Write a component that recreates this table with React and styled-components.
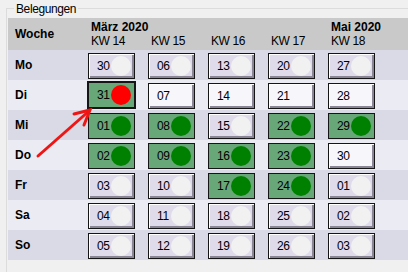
import React from "react";
import styled, { createGlobalStyle } from "styled-components";

const Global = createGlobalStyle`
  html, body { margin: 0; padding: 0; background: #f0f0f0; }
  body {
    width: 408px; height: 272px; overflow: hidden;
    font-family: "Liberation Sans", Arial, sans-serif;
    font-size: 12px; letter-spacing: -0.4px; color: #000;
  }
`;

const Page = styled.div`
  position: relative;
  display: flex;
  flex-direction: column;
  padding: 8px 0 0 6px;
  height: 272px;
  box-sizing: border-box;
  overflow: hidden;
`;

const Frame = styled.div`
  position: relative;
  flex: 1;
  border-top: 1px solid #dcdcdc;
  border-left: 1px solid #dcdcdc;
  padding: 9px 0 0 1px;
`;

const Legend = styled.span`
  position: absolute;
  top: -8px;
  left: 7px;
  padding: 0 2px;
  background: #f0f0f0;
  line-height: 16px;
`;

const Row = styled.div`
  display: grid;
  grid-template-columns: 78px repeat(5, 60px) 1fr;
  height: ${(p) => p.$h}px;
  background: ${(p) => p.$bg};
`;

const Label = styled.div`
  display: flex;
  align-items: center;
  padding-left: 7px;
  font-weight: bold;
  letter-spacing: 0;
`;

const WeekHead = styled.div`
  display: flex;
  flex-direction: column;
  justify-content: flex-end;
  padding: 0 0 2px 5px;
  line-height: 14px;
`;

const Month = styled.span`
  font-weight: bold;
  letter-spacing: 0;
  white-space: nowrap;
`;

const Slot = styled.div`
  padding: ${(p) => (p.$selected ? "1px 0 0 1px" : "3px 0 0 2px")};
`;

const fills = {
  free: "#dfdbeb",
  plain: "#f7f6fb",
  booked: "#68a878",
  selected: "#68a878",
};

const Cell = styled.div`
  box-sizing: border-box;
  width: ${(p) => (p.$state === "selected" ? 49 : 47)}px;
  height: ${(p) => (p.$state === "selected" ? 28 : 26)}px;
  border: ${(p) => (p.$state === "selected" ? 2 : 1)}px solid #151515;
  background: ${(p) => fills[p.$state]};
  box-shadow: ${(p) =>
    p.$state === "free" || p.$state === "plain"
      ? "inset 1px 1px 0 #ffffff, inset -2px -2px 0 #8a8696"
      : "none"};
  display: flex;
  align-items: center;
  justify-content: space-between;
  padding: 0 3px 0 8px;
  line-height: 1;
`;

const dots = {
  free: "#f1f1f1",
  booked: "#008000",
  selected: "#ff0000",
};

const Dot = styled.span`
  width: 20px;
  height: 20px;
  border-radius: 50%;
  background: ${(p) => dots[p.$state]};
`;

const Arrow = styled.svg`
  position: absolute;
  left: 0;
  top: 0;
  pointer-events: none;
`;

const weeks = [
  { kw: 14, month: "März 2020" },
  { kw: 15 },
  { kw: 16 },
  { kw: 17 },
  { kw: 18, month: "Mai 2020" },
];

const F = "free", P = "plain", B = "booked", S = "selected";

const days = [
  { name: "Mo", cells: [["30", F], ["06", F], ["13", F], ["20", F], ["27", F]] },
  { name: "Di", cells: [["31", S], ["07", P], ["14", P], ["21", P], ["28", P]] },
  { name: "Mi", cells: [["01", B], ["08", B], ["15", F], ["22", B], ["29", B]] },
  { name: "Do", cells: [["02", B], ["09", B], ["16", B], ["23", B], ["30", P]] },
  { name: "Fr", cells: [["03", F], ["10", F], ["17", B], ["24", B], ["01", F]] },
  { name: "Sa", cells: [["04", F], ["11", F], ["18", F], ["25", F], ["02", F]] },
  { name: "So", cells: [["05", F], ["12", F], ["19", F], ["26", F], ["03", F]] },
];

export default function App() {
  return (
    <Page>
      <Global />
      <Frame>
        <Legend>Belegungen</Legend>
        <Row $h={32} $bg="#c9c9c9">
          <Label>Woche</Label>
          {weeks.map((w) => (
            <WeekHead key={w.kw}>
              {w.month && <Month>{w.month}</Month>}
              <span>KW {w.kw}</span>
            </WeekHead>
          ))}
        </Row>
        {days.map((d, i) => (
          <Row key={d.name} $h={30} $bg={i % 2 === 0 ? "#dadae6" : "#ebebf3"}>
            <Label>{d.name}</Label>
            {d.cells.map(([date, state]) => (
              <Slot key={date + state} $selected={state === S}>
                <Cell $state={state}>
                  <span>{date}</span>
                  {state !== P && <Dot $state={state} />}
                </Cell>
              </Slot>
            ))}
          </Row>
        ))}
      </Frame>
      <Arrow width="408" height="272" viewBox="0 0 408 272">
        <g stroke="#ee1515" strokeWidth="3" strokeLinecap="round" fill="none">
          <line x1="38" y1="156" x2="89" y2="111" />
          <polyline points="74,114 90,110 84,125" />
        </g>
      </Arrow>
    </Page>
  );
}
